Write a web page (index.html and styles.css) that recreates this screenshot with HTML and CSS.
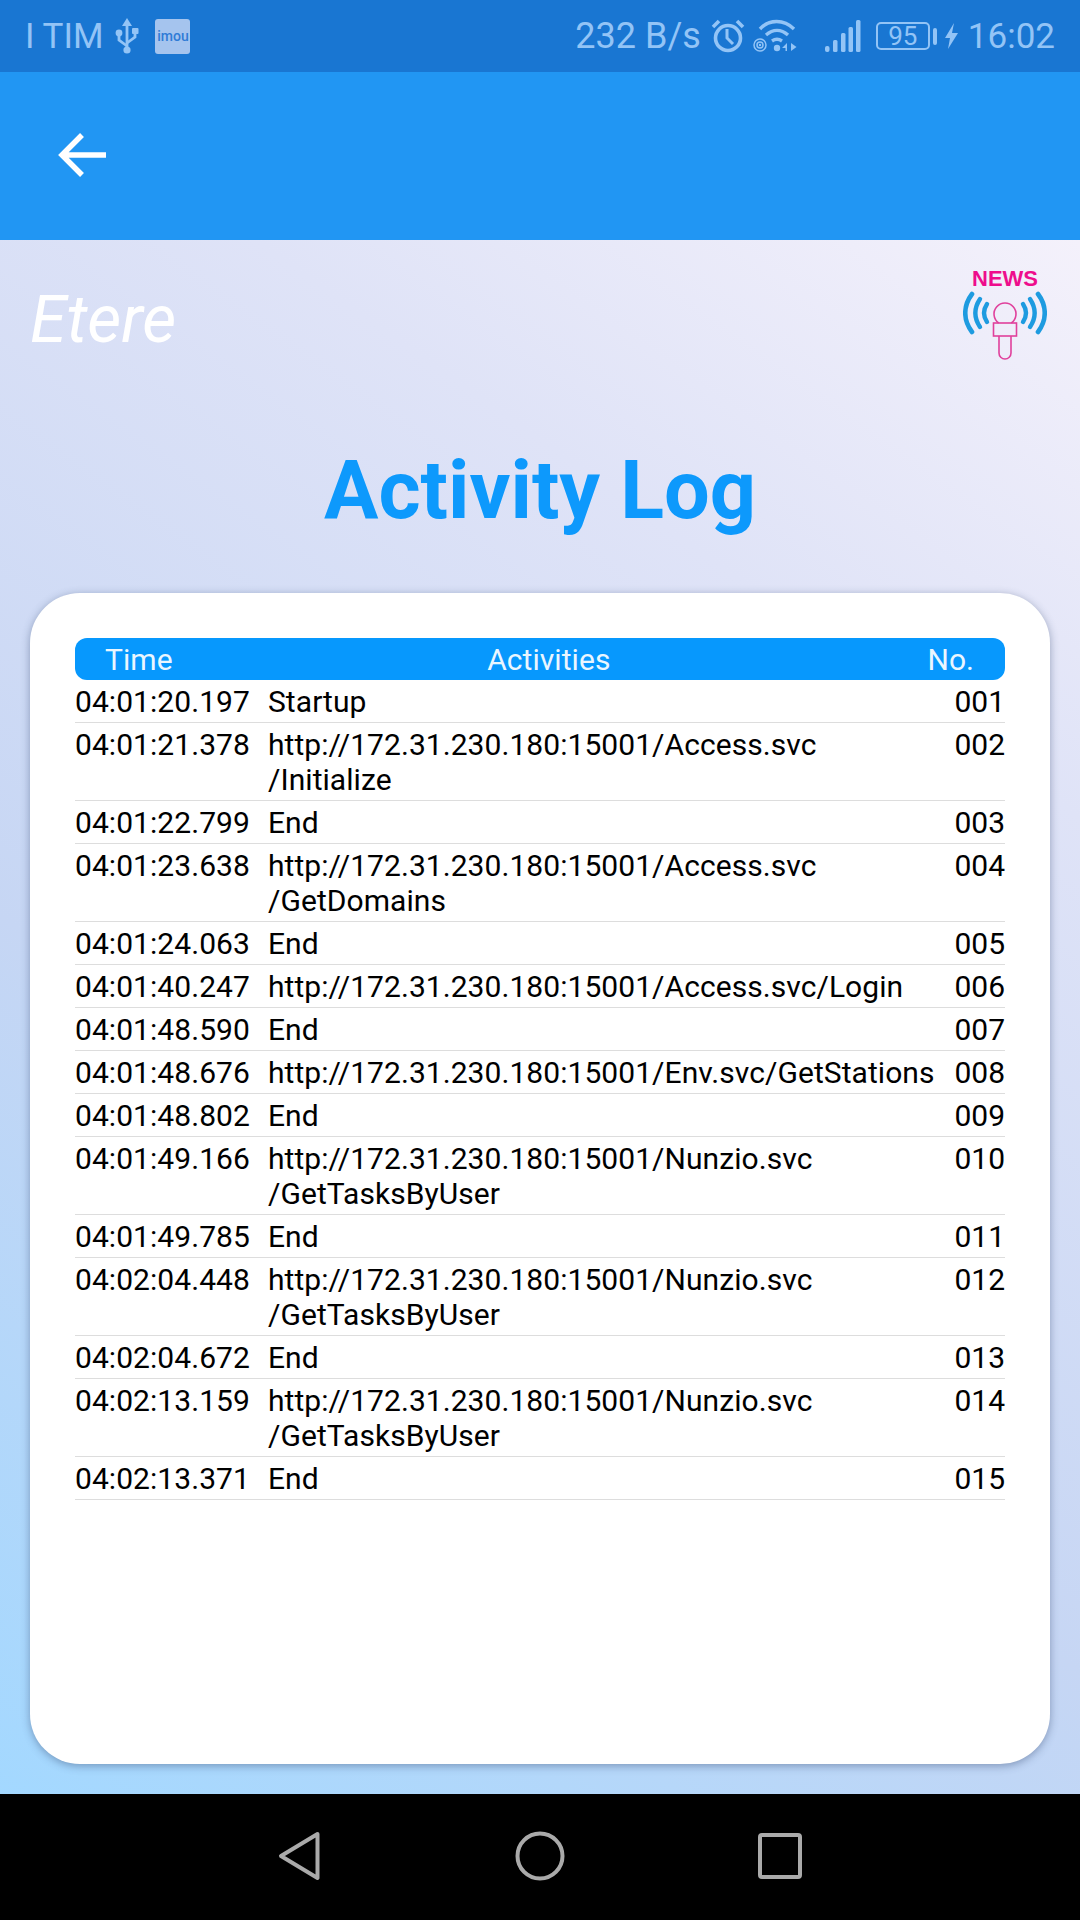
FILE: index.html
```html
<!DOCTYPE html>
<html lang="en">
<head>
<meta charset="utf-8">
<title>Activity Log</title>
<link rel="stylesheet" href="styles.css">
</head>
<body>
<div class="screen">
  <header class="status">
    <div class="status-left">
      <span class="carrier">I TIM</span>
      <svg class="ic-usb" viewBox="0 0 24 36" width="24" height="36"><g fill="none" stroke="#93c4f6" stroke-width="2.800"><path d="M12 7v25"/><path d="M12 28l-8-6v-4"/><path d="M12 25l8-6v-4"/></g><path d="M12 0l5 8H7z" fill="#93c4f6"/><circle cx="4" cy="15" r="3.400" fill="#93c4f6"/><rect x="17" y="10" width="6.500" height="6" rx="1" fill="#93c4f6"/><circle cx="12" cy="32" r="3.600" fill="#93c4f6"/></svg>
      <span class="imou"><span class="imou-text">imou</span></span>
    </div>
    <div class="status-right">
      <span class="speed">232 B/s</span>
      <svg class="ic-alarm" viewBox="0 0 34 34" width="34" height="34"><circle cx="17" cy="19" r="12.500" fill="none" stroke="#93c4f6" stroke-width="3.600"/><path d="M16 10v9l6 6" fill="none" stroke="#93c4f6" stroke-width="3"/><path d="M2 8l6-6M32 8l-6-6" fill="none" stroke="#93c4f6" stroke-width="3.600"/></svg>
      <svg class="ic-wifi" viewBox="0 0 44 34" width="44" height="34"><g fill="none" stroke="#93c4f6"><path d="M7 10C16 0 31 0 41 10" stroke-width="3.400"/><path d="M13 16c7-6 15-6 22 0" stroke-width="3.400"/><path d="M19 22c3-2 7-2 10 0" stroke-width="3.400"/><circle cx="7" cy="26" r="6" stroke-width="1.500"/><circle cx="7" cy="26" r="3" stroke-width="1.500"/></g><circle cx="7" cy="26" r="1.200" fill="#93c4f6"/><circle cx="24" cy="29" r="3.200" fill="#93c4f6"/><path d="M34 24v8h-1.500v-3H29zM38 24l5.500 4-5.500 4z" fill="#93c4f6"/></svg>
      <svg class="ic-signal" viewBox="0 0 36 34" width="36" height="34"><g fill="#93c4f6"><rect x="0" y="27" width="4.500" height="6" rx="2"/><rect x="8" y="21" width="4.500" height="12" rx="1.500"/><rect x="16" y="14" width="4.500" height="19" rx="1.500"/><rect x="23.500" y="8" width="4.500" height="25" rx="1.500"/><rect x="31" y="1" width="4.500" height="32" rx="1.500"/></g></svg>
      <span class="battery"><span class="battery-level">95</span></span>
      <span class="battery-nub"></span>
      <svg class="ic-bolt" viewBox="0 0 13 26" width="13" height="26"><path d="M9 0L0 15h5l-2 11 10-16H7z" fill="#93c4f6"/></svg>
      <span class="clock">16:02</span>
    </div>
  </header>

  <nav class="appbar">
    <svg class="ic-back" viewBox="0 0 50 50" width="50" height="50"><path d="M49 25H5M25 5L5 25l20 20" fill="none" stroke="#fff" stroke-width="5.500"/></svg>
  </nav>

  <main class="content">
    <div class="brand-row">
      <span class="brand">Etere</span>
      <svg class="ic-news" viewBox="0 -6 84 96" width="84" height="96">
        <text class="news-label" x="42" y="16" text-anchor="middle">NEWS</text>
        <g fill="none" stroke="#1e9be0" stroke-linecap="round">
          <path d="M9 24C0 36 0 50 9 62" stroke-width="4.600"/>
          <path d="M17 29C11 38 11 48 17 57" stroke-width="4.400"/>
          <path d="M24 34C20 40 20 46 24 52" stroke-width="4.400"/>
          <path d="M75 24C84 36 84 50 75 62" stroke-width="4.600"/>
          <path d="M67 29C73 38 73 48 67 57" stroke-width="4.400"/>
          <path d="M60 34C64 40 64 46 60 52" stroke-width="4.400"/>
        </g>
        <g fill="none" stroke="#e0409c" stroke-width="1.600">
          <path d="M35.700 53a11 11 0 1 1 12.600 0"/>
          <rect x="30.500" y="53" width="23" height="13"/>
          <path d="M36 66v17a6 6 0 0 0 12 0V66"/>
        </g>
      </svg>
    </div>
    <h1 class="title">Activity Log</h1>
    <section class="card">
      <div class="table-head">
        <span class="col-time head-time">Time</span>
        <span class="col-act head-act">Activities</span>
        <span class="col-no head-no">No.</span>
      </div>
      <div class="row"><span class="col-time">04:01:20.197</span><span class="col-act">Startup</span><span class="col-no">001</span></div>
      <div class="row"><span class="col-time">04:01:21.378</span><span class="col-act">http://172.31.230.180:15001/Access.svc<br>/Initialize</span><span class="col-no">002</span></div>
      <div class="row"><span class="col-time">04:01:22.799</span><span class="col-act">End</span><span class="col-no">003</span></div>
      <div class="row"><span class="col-time">04:01:23.638</span><span class="col-act">http://172.31.230.180:15001/Access.svc<br>/GetDomains</span><span class="col-no">004</span></div>
      <div class="row"><span class="col-time">04:01:24.063</span><span class="col-act">End</span><span class="col-no">005</span></div>
      <div class="row"><span class="col-time">04:01:40.247</span><span class="col-act">http://172.31.230.180:15001/Access.svc/Login</span><span class="col-no">006</span></div>
      <div class="row"><span class="col-time">04:01:48.590</span><span class="col-act">End</span><span class="col-no">007</span></div>
      <div class="row"><span class="col-time">04:01:48.676</span><span class="col-act">http://172.31.230.180:15001/Env.svc/GetStations</span><span class="col-no">008</span></div>
      <div class="row"><span class="col-time">04:01:48.802</span><span class="col-act">End</span><span class="col-no">009</span></div>
      <div class="row"><span class="col-time">04:01:49.166</span><span class="col-act">http://172.31.230.180:15001/Nunzio.svc<br>/GetTasksByUser</span><span class="col-no">010</span></div>
      <div class="row"><span class="col-time">04:01:49.785</span><span class="col-act">End</span><span class="col-no">011</span></div>
      <div class="row"><span class="col-time">04:02:04.448</span><span class="col-act">http://172.31.230.180:15001/Nunzio.svc<br>/GetTasksByUser</span><span class="col-no">012</span></div>
      <div class="row"><span class="col-time">04:02:04.672</span><span class="col-act">End</span><span class="col-no">013</span></div>
      <div class="row"><span class="col-time">04:02:13.159</span><span class="col-act">http://172.31.230.180:15001/Nunzio.svc<br>/GetTasksByUser</span><span class="col-no">014</span></div>
      <div class="row"><span class="col-time">04:02:13.371</span><span class="col-act">End</span><span class="col-no">015</span></div>
    </section>
  </main>

  <footer class="navbar">
    <svg class="nav-ic" viewBox="0 0 44 50" width="44" height="50"><path d="M39.500 3L3 25l36.500 22z" fill="none" stroke="#aaa" stroke-width="4" stroke-linejoin="round"/></svg>
    <svg class="nav-ic" viewBox="0 0 50 50" width="50" height="50"><circle cx="25" cy="25" r="22.500" fill="none" stroke="#aaa" stroke-width="4"/></svg>
    <svg class="nav-ic" viewBox="0 0 44 46" width="44" height="46"><rect x="2" y="2" width="40" height="42" rx="2" fill="none" stroke="#aaa" stroke-width="4"/></svg>
  </footer>
</div>
</body>
</html>
```

FILE: styles.css
```css
* { box-sizing: border-box; }
html, body { margin: 0; padding: 0; }
body { font-family: Roboto, "Liberation Sans", sans-serif; background: #000; }
.screen { width: 1080px; height: 1920px; display: flex; flex-direction: column; overflow: hidden; }

.status { height: 72px; flex: none; background: #1976d2; color: #93c4f6; display: flex; justify-content: space-between; align-items: center; padding: 0 25px; font-size: 35px; }
.status-left, .status-right { display: flex; align-items: center; }
.carrier { font-size: 35px; }
.ic-usb { margin-left: 12px; }
.imou { width: 35px; height: 35px; margin-left: 16px; border-radius: 3px; background: #a5c4ee; display: flex; align-items: center; justify-content: center; }
.imou-text { font-size: 14px; font-weight: 500; color: #2f7bd6; line-height: 1; }
.speed { font-size: 36px; }
.ic-alarm { margin-left: 10px; }
.ic-wifi { margin-left: 8px; }
.ic-signal { margin-left: 28px; }
.battery { width: 54px; height: 28px; margin-left: 15px; border: 2px solid #93c4f6; border-radius: 5px; display: flex; align-items: center; justify-content: center; }
.battery-level { font-size: 26px; line-height: 1; }
.battery-nub { width: 4px; height: 17px; margin-left: 3px; background: #93c4f6; border-radius: 2px; }
.ic-bolt { margin-left: 8px; }
.clock { margin-left: 10px; }

.appbar { height: 168px; flex: none; background: #2196f3; display: flex; align-items: center; padding: 0 0 2px 57px; }
.ic-back { display: block; }

.content { flex: 1; min-height: 0; display: flex; flex-direction: column; padding: 30px; background: linear-gradient(215deg, #f4f1fb 0%, #dfe3f7 25%, #c6d6f4 62%, #a3d8ff 100%); }
.brand-row { height: 90px; flex: none; display: flex; justify-content: space-between; align-items: center; padding-right: 3px; }
.brand { font-size: 66px; font-style: italic; font-weight: 400; color: #fff; margin-top: 8px; }
.ic-news { display: block; margin-top: -6px; }
.news-label { font-family: "Liberation Sans", Arial, sans-serif; font-weight: 700; font-size: 22px; fill: #ee0d8c; }

.title { margin: 84px 0 0; height: 149px; flex: none; font-size: 81px; line-height: 94px; font-weight: 700; color: #0d99fc; text-align: center; }

.card { flex: 1; min-height: 0; background: #fff; border-radius: 50px; padding: 45px 45px 0; box-shadow: 0 2px 8px rgba(50, 70, 110, .45); color: #000; font-size: 30px; line-height: 35px; }

.table-head { height: 42px; background: #0798fd; color: #eaf6ff; border-radius: 12px; display: flex; align-items: center; }
.row { display: flex; padding: 4px 0 3px; border-bottom: 1px solid #ddd; }
.col-time { width: 193px; flex: none; letter-spacing: .06px; }
.col-act { flex: 1; min-width: 0; letter-spacing: .06px; }
.col-no { flex: none; text-align: right; }
.head-time { padding-left: 30px; }
.head-act { text-align: center; padding-right: 98px; }
.head-no { padding-right: 31px; }

.navbar { height: 126px; flex: none; background: #000; display: flex; align-items: center; justify-content: center; gap: 193px; padding-bottom: 2px; }
.nav-ic { display: block; }
```
